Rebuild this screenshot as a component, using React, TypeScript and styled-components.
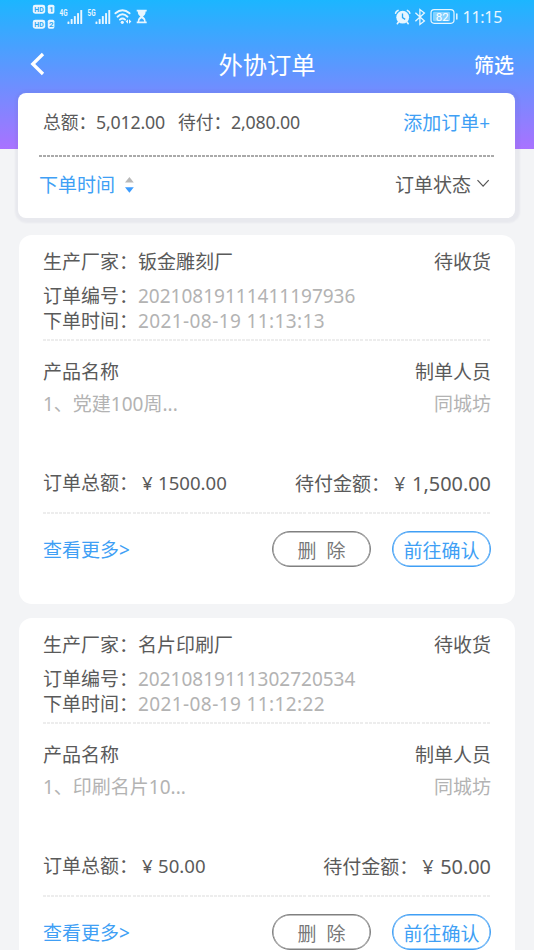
import React from "react";
import styled, { createGlobalStyle } from "styled-components";

const BLUE = "#409ff5";

const Global = createGlobalStyle`
  * { box-sizing: border-box; }
  body {
    margin: 0;
    overflow: hidden;
    font-family: "Noto Sans", "Noto Sans CJK SC", sans-serif;
    font-size: 19px;
    color: #5a5a5a;
    background: #f3f4f6;
  }
`;

const Page = styled.main`
  height: 950px;
  overflow: hidden;
  background: linear-gradient(180deg, #1cb6ff 0, #a972ff 149px, #f3f4f6 149px);
`;

const StatusBar = styled.header`
  height: 34px;
  padding: 0 32px;
  display: flex;
  justify-content: space-between;
  color: #e8f6ff;
`;

const StatusGroup = styled.div`
  display: flex;
  align-items: center;
`;

const Clock = styled.time`
  margin-left: 5px;
  font: 400 16px/34px "Noto Sans", sans-serif;
  letter-spacing: -0.3px;
`;

const NavBar = styled.nav`
  height: 59px;
  padding: 0 20px 0 30px;
  display: grid;
  grid-template-columns: 50px 1fr 50px;
  align-items: center;
  color: #fff;
`;

const Title = styled.h1`
  margin: 3px 0 0 -10px;
  text-align: center;
  font-size: 24.3px;
  line-height: 36px;
  font-weight: 400;
`;

const NavAction = styled.span`
  text-align: right;
  margin-top: 5px;
  font-size: 20px;
  line-height: 30px;
  font-weight: 500;
  white-space: nowrap;
`;

const Summary = styled.section`
  width: 497px;
  height: 125px;
  margin: 0 0 17px 18px;
  padding: 0 21px;
  border-radius: 8px;
  background: #fff;
  box-shadow: 1px 1px 2px 4px rgba(100, 100, 140, 0.07);
`;

const SummaryRow = styled.div<{ $height: number; $inset?: number }>`
  height: ${(p) => p.$height}px;
  padding: 0 4px 2px ${(p) => p.$inset ?? 0}px;
  display: flex;
  justify-content: space-between;
  align-items: center;
`;

const Totals = styled.div`
  display: flex;
  font-size: 17.8px;
  line-height: 24px;
  padding-bottom: 2px;
`;

const Total = styled.span<{ $width: number }>`
  width: ${(p) => p.$width}px;
  white-space: nowrap;
  display: flex;
  letter-spacing: -0.2px;
`;

const TotalLabel = styled.span`
  width: 53px;
  letter-spacing: 0;
`;

const LinkText = styled.span`
  color: ${BLUE};
  line-height: 28px;
`;

const Divider = styled.div<{ $color: string }>`
  height: 2px;
  background: repeating-linear-gradient(90deg, ${(p) => p.$color} 0 3px, transparent 3px 4.07px);
`;

const Filter = styled.span<{ $active?: boolean }>`
  display: flex;
  align-items: center;
  gap: ${(p) => (p.$active ? 10 : 5)}px;
  line-height: 28px;
  color: ${(p) => (p.$active ? BLUE : "#5a5a5a")};
`;

const Card = styled.article`
  width: 496px;
  height: 369px;
  margin: 0 0 14px 19px;
  padding: 9px 24px 0;
  border-radius: 13px;
  background: #fff;
`;

const Line = styled.div<{ $height: number; $muted?: boolean }>`
  height: ${(p) => p.$height}px;
  line-height: ${(p) => p.$height}px;
  display: flex;
  justify-content: space-between;
  white-space: nowrap;
  color: ${(p) => (p.$muted ? "#b3b3b3" : "#5a5a5a")};
`;

const Field = styled.span`
  display: flex;
`;

const Label = styled.span<{ $width?: number }>`
  width: ${(p) => p.$width ?? 95}px;
`;

const Code = styled.span<{ $spacing?: number }>`
  color: #b3b3b3;
  letter-spacing: ${(p) => p.$spacing ?? 0}px;
`;

const Products = styled.div`
  height: 113px;
  padding-top: 15px;
`;

const Amount = styled.span<{ $size?: number }>`
  display: flex;
  font-size: ${(p) => p.$size ?? 18.6}px;
`;

const Yen = styled.span<{ $width: number }>`
  width: ${(p) => p.$width}px;
  padding-left: 4px;
`;

const Due = styled(Field)`
  padding-top: 1px;
`;

const Actions = styled.div`
  height: 72px;
  display: flex;
  align-items: center;
  justify-content: space-between;
`;

const ButtonGroup = styled.div`
  display: flex;
  gap: 21px;
  padding-bottom: 2px;
`;

const PillButton = styled.button<{ $primary?: boolean }>`
  width: 99px;
  height: 36px;
  padding: 3px 0 0;
  border: 1px solid ${(p) => (p.$primary ? BLUE : "#808080")};
  box-shadow: inset 0 0 0 0.5px ${(p) => (p.$primary ? BLUE : "#808080")};
  border-radius: 18px;
  background: #fff;
  color: ${(p) => (p.$primary ? BLUE : "#777")};
  font: inherit;
  line-height: 28px;
  white-space: pre;
`;

const SignalIcons = () => (
  <svg width="120" height="34" viewBox="32 0 120 34" fill="currentColor">
    {[5, 20].map((y, i) => (
      <g key={y}>
        <rect x="32.8" y={y - 0.3} width="12.4" height="9" rx="2.4" />
        <rect x="47.8" y={y - 0.3} width="6.6" height="9" rx="1.6" />
        <g fill="#2da8f5" fontFamily="Roboto, sans-serif" fontWeight="700">
          <text x="34.3" y={y + 7.1} fontSize="8" textLength="9.4" lengthAdjust="spacingAndGlyphs">HD</text>
          <text x="48.9" y={y + 7.1} fontSize="8">{i + 1}</text>
        </g>
      </g>
    ))}
    {[59.5, 87.5].map((x, i) => (
      <g key={x}>
        <text x={x} y="15.6" fontSize="8.6" fontWeight="700" textLength="8" lengthAdjust="spacingAndGlyphs" fontFamily="Roboto, sans-serif">
          {i ? "5G" : "4G"}
        </text>
        {[2.5, 5, 8, 11, 14].map((h, n) => (
          <rect key={h} x={x + 8 + n * 3.2} y={24 - h} width="1.9" height={h} rx=".6" />
        ))}
      </g>
    ))}
    <g fill="none" stroke="currentColor" strokeWidth="1.9" strokeLinecap="round">
      <path d="M115.4 13.3Q122.5 7.2 129.6 13.3M117.5 16.7Q122.5 12 127.5 16.7M119.9 19.6Q122.5 17.2 125.1 19.6" />
    </g>
    <circle cx="122.3" cy="22.3" r="1.6" />
    <path d="m128 19.3-2.4 2.2 2.4 2.2zM129 19.3l2.4 2.2-2.4 2.2z" />
    <path d="M136.7 9.8h10v1.7h-1.1c0 2.5-.9 3.8-2.6 5 1.7 1.2 2.6 2.6 2.6 5h1.1v1.8h-10v-1.8h1.1c0-2.4.9-3.8 2.6-5-1.7-1.2-2.6-2.5-2.6-5h-1.1z" />
    <path d="M139.2 21.4c.2-1.5 1.1-2.4 2.5-3.2 1.4.8 2.3 1.7 2.5 3.2z" fill="#35abff" />
  </svg>
);

const DeviceIcons = () => (
  <svg width="64" height="34" viewBox="394 0 64 34" fill="none" stroke="currentColor">
    <circle cx="402.7" cy="17.2" r="6.4" fill="currentColor" stroke="none" />
    <path d="M395.6 13.2Q396 11 398 10.4M409.8 13.2Q409.4 11 407.4 10.4M398.5 22l-1.2 1.7M407 22l1.2 1.7" strokeWidth="1.6" strokeLinecap="round" />
    <path d="M402.5 13.4v4.2l2.7 1.8" stroke="#2aa9f8" strokeWidth="1.3" />
    <path d="m415.4 12.7 9 8.2-4.5 3.6v-15l4.5 3.6-9 8.2" strokeWidth="1.3" />
    <rect x="431" y="9.7" width="23" height="13.6" rx="3.2" strokeWidth="1.2" />
    <rect x="433" y="11.7" width="17" height="9.6" rx="1.4" fill="#84d2ff" stroke="none" />
    <path d="M456.8 14v5" strokeWidth="1.5" strokeLinecap="round" />
    <text x="442.3" y="20.7" textAnchor="middle" fontFamily="Roboto, sans-serif" fontSize="11.5" fontWeight="400" fill="#fff" stroke="none">82</text>
  </svg>
);

const BackIcon = () => (
  <svg width="16" height="24" viewBox="0 0 16 24" fill="none" stroke="#fff" strokeWidth="3.3">
    <path d="M13 2 2.8 12 13 22" />
  </svg>
);

const SortIcon = () => (
  <svg width="9" height="18" viewBox="0 0 9 18">
    <path d="M0 6.5 4.4 1l4.4 5.5z" fill="#b8b8b8" />
    <path d="M0 11.2h8.8l-4.4 5.6z" fill="#3c9cff" />
  </svg>
);

const ChevronIcon = () => (
  <svg width="14" height="12" viewBox="0 0 14 12" fill="none" stroke="#555" strokeWidth="1.2">
    <path d="m1.5 1.2 5.6 6 5.6-6" />
  </svg>
);

type Order = {
  factory: string;
  code: string;
  time: string;
  product: string;
  total: string;
  due: string;
};

const orders: Order[] = [
  { factory: "钣金雕刻厂", code: "20210819111411197936", time: "2021-08-19 11:13:13", product: "1、党建100周...", total: "1500.00", due: "1,500.00" },
  { factory: "名片印刷厂", code: "20210819111302720534", time: "2021-08-19 11:12:22", product: "1、印刷名片10...", total: "50.00", due: "50.00" },
];

const OrderCard = ({ order }: { order: Order }) => (
  <Card>
    <Line $height={36}>
      <Field><Label>生产厂家：</Label>{order.factory}</Field>
      <span>待收货</span>
    </Line>
    <Line $height={32}>
      <Field><Label>订单编号：</Label><Code>{order.code}</Code></Field>
    </Line>
    <Line $height={18}>
      <Field><Label>下单时间：</Label><Code $spacing={0.4}>{order.time}</Code></Field>
    </Line>
    <Line $height={9} />
    <Divider $color="#ededed" />
    <Products>
      <Line $height={32}><span>产品名称</span><span>制单人员</span></Line>
      <Line $height={32} $muted><span>{order.product}</span><span>同城坊</span></Line>
    </Products>
    <Line $height={58}>
      <Field>
        <Label $width={95}>订单总额：</Label>
        <Amount><Yen $width={20}>¥</Yen>{order.total}</Amount>
      </Field>
      <Due>
        <Label $width={95}>待付金额：</Label>
        <Amount $size={19.9}><Yen $width={22}>¥</Yen>{order.due}</Amount>
      </Due>
    </Line>
    <Divider $color="#ededed" />
    <Actions>
      <LinkText>查看更多&gt;</LinkText>
      <ButtonGroup>
        <PillButton>{"删  除"}</PillButton>
        <PillButton $primary>前往确认</PillButton>
      </ButtonGroup>
    </Actions>
  </Card>
);

export default function App() {
  return (
    <Page>
      <Global />
      <StatusBar>
        <StatusGroup><SignalIcons /></StatusGroup>
        <StatusGroup><DeviceIcons /><Clock>11:15</Clock></StatusGroup>
      </StatusBar>
      <NavBar>
        <BackIcon />
        <Title>外协订单</Title>
        <NavAction>筛选</NavAction>
      </NavBar>
      <Summary>
        <SummaryRow $height={62} $inset={4}>
          <Totals>
            <Total $width={135}><TotalLabel>总额：</TotalLabel>5,012.00</Total>
            <Total $width={125}><TotalLabel>待付：</TotalLabel>2,080.00</Total>
          </Totals>
          <LinkText>添加订单+</LinkText>
        </SummaryRow>
        <Divider $color="#aaa" />
        <SummaryRow $height={57}>
          <Filter $active>下单时间<SortIcon /></Filter>
          <Filter>订单状态<ChevronIcon /></Filter>
        </SummaryRow>
      </Summary>
      {orders.map((order) => <OrderCard key={order.code} order={order} />)}
    </Page>
  );
}
